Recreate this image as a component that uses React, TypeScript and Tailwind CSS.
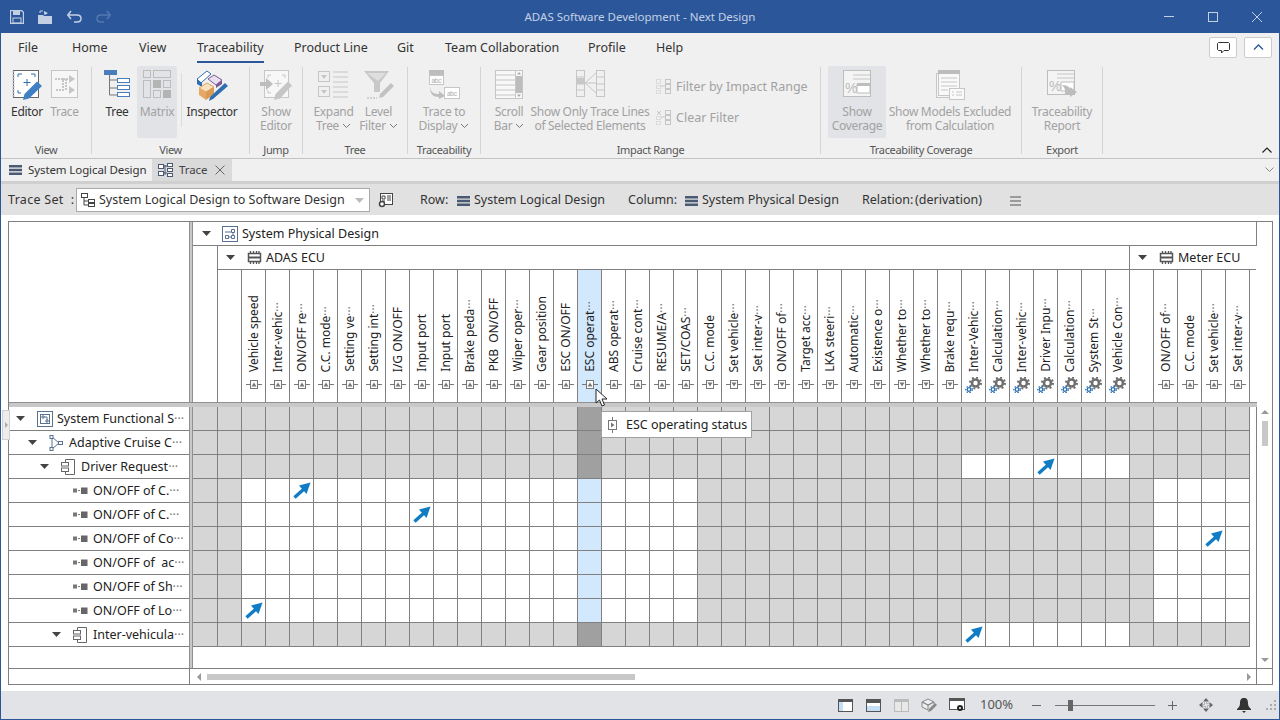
import React from "react";

const COL_W = "w-[24px]";

// [label, port kind], a trailing ~ means the label is cut off with dots
const adasCols: [string, string][] = [
  ["Vehicle speed", "up"], ["Inter-vehic~", "up"], ["ON/OFF re~", "up"], ["C.C. mode~", "up"],
  ["Setting ve~", "up"], ["Setting int~", "up"], ["I/G ON/OFF", "up"], ["Input port", "up"],
  ["Input port", "up"], ["Brake peda~", "up"], ["PKB  ON/OFF", "up"], ["Wiper oper~", "up"],
  ["Gear position", "up"], ["ESC ON/OFF", "up"], ["ESC operat~", "up"], ["ABS operat~", "up"],
  ["Cruise cont~", "up"], ["RESUME/A~", "up"], ["SET/COAS~", "up"], ["C.C. mode", "down"],
  ["Set vehicle~", "down"], ["Set inter-v~", "down"], ["ON/OFF of~", "down"], ["Target acc~", "down"],
  ["LKA steeri~", "down"], ["Automatic~", "down"], ["Existence o~", "down"], ["Whether to~", "down"],
  ["Whether to~", "down"], ["Brake requ~", "down"], ["Inter-Vehic~", "gear"], ["Calculation~", "gear"],
  ["Inter-vehic~", "gear"], ["Driver Inpu~", "gear"], ["Calculation~", "gear"], ["System St~", "gear"],
  ["Vehicle Con~", "gear"],
];
const meterCols: [string, string][] = [
  ["ON/OFF of~", "up"], ["C.C. mode", "up"], ["Set vehicle~", "up"], ["Set inter-v~", "up"],
];

const treeRows = [
  { pad: 7, arrow: true, icon: "system", label: "System Functional S" },
  { pad: 19, arrow: true, icon: "flow", label: "Adaptive Cruise C" },
  { pad: 31, arrow: true, icon: "comp", label: "Driver Request" },
  { pad: 64, arrow: false, icon: "leaf", label: "ON/OFF of C." },
  { pad: 64, arrow: false, icon: "leaf", label: "ON/OFF of C." },
  { pad: 64, arrow: false, icon: "leaf", label: "ON/OFF of Co" },
  { pad: 64, arrow: false, icon: "leaf", label: "ON/OFF of  ac" },
  { pad: 64, arrow: false, icon: "leaf", label: "ON/OFF of Sh" },
  { pad: 64, arrow: false, icon: "leaf", label: "ON/OFF of Lo" },
  { pad: 43, arrow: true, icon: "comp", label: "Inter-vehicula" },
];

const arrows = ["3-4", "4-9", "5-42", "8-2", "2-35", "9-32"];

function cellClass(r: number, c: number) {
  const open = r >= 3 && r <= 8 ? (c >= 2 && c <= 20) || c >= 40 : (r === 2 || r === 9) && c >= 32 && c <= 38;
  if (c === 16) return r >= 3 && r <= 8 ? "bg-[#d2e9fd]" : "bg-[#a0a0a0]";
  return open ? "bg-white" : "bg-[#d6d6d6]";
}

const Dots = () => <span className="text-[#777]">···</span>;

function Caret() {
  return (
    <svg width="10" height="5" viewBox="0 0 10 5" className="shrink-0">
      <path d="M0 0h9L4.500 5z" fill="#444" />
    </svg>
  );
}

function PortIcon({ kind }: { kind: string }) {
  if (kind === "gear") {
    return (
      <svg width="17" height="16" viewBox="0 0 17 16">
        <circle cx="10.500" cy="6" r="3.500" fill="none" stroke="#707070" strokeWidth="2.600" />
        <circle cx="10.500" cy="6" r="5.500" fill="none" stroke="#707070" strokeWidth="2" strokeDasharray="2 2.300" />
        <circle cx="4" cy="12.500" r="1.800" fill="none" stroke="#2a70b8" strokeWidth="1.300" />
        <circle cx="4" cy="12.500" r="3.200" fill="none" stroke="#2a70b8" strokeWidth="1.200" strokeDasharray="1.500 1.500" />
      </svg>
    );
  }
  return (
    <svg width="16" height="9" viewBox="0 0 16 9">
      <path d="M0 4.500h4M12 4.500h4" stroke="#777" />
      <rect x="4.500" y="0.500" width="7" height="8" fill="#fff" stroke="#777" />
      <path d={kind === "up" ? "M8 2.500l2.500 4h-5z" : "M8 6.500l2.500-4h-5z"} fill="#777" />
    </svg>
  );
}

function HeadCell({ label, kind }: { label: string; kind: string }) {
  const cut = label.endsWith("~");
  const text = cut ? label.slice(0, -1) : label;
  const hot = label === "ESC operat~";
  return (
    <div className={`${COL_W} h-[132px] shrink-0 border-l border-[#808080] flex flex-col items-center ${hot ? "bg-[#d2e9fd]" : ""}`}>
      <div className="h-[102px] flex flex-col justify-end overflow-hidden">
        <span className="[writing-mode:vertical-rl] rotate-180 whitespace-pre text-[12px] leading-[16px] text-[#222]">
          {text}
          {cut && <Dots />}
        </span>
      </div>
      <div className="flex-1 flex items-start justify-center pt-[8px]">
        <div className={kind === "gear" ? "-mt-[3px]" : ""}>
          <PortIcon kind={kind} />
        </div>
      </div>
    </div>
  );
}

function ChipIcon() {
  return (
    <svg width="15" height="13" viewBox="0 0 15 13" className="shrink-0">
      <rect x="1.500" y="2.500" width="12" height="8" fill="none" stroke="#555" strokeWidth="1.500" />
      <path d="M2 6.500h11" stroke="#555" strokeWidth="2" />
      <path d="M3.500 0v2M6.500 0v2M9.500 0v2M12 0v2M3.500 11v2M6.500 11v2M9.500 11v2M12 11v2" stroke="#555" strokeWidth="1.300" />
    </svg>
  );
}

function TreeIcon({ kind }: { kind: string }) {
  if (kind === "system") {
    return (
      <svg width="16" height="16" viewBox="0 0 16 16" className="shrink-0">
        <rect x="0.500" y="0.500" width="15" height="15" fill="#fff" stroke="#5a7190" />
        <rect x="3.500" y="3.500" width="9" height="9" fill="none" stroke="#5a7190" />
        <path d="M5 5h2v2H5zM9 9h2v2H9zM7 6h3v3" fill="none" stroke="#5a7190" />
      </svg>
    );
  }
  if (kind === "flow") {
    return (
      <svg width="14" height="16" viewBox="0 0 14 16" className="shrink-0">
        <path d="M3 2v12M3 2l7 6-7 6" fill="none" stroke="#5a7190" />
        <rect x="1" y="0.500" width="3" height="3" fill="#fff" stroke="#5a7190" />
        <rect x="1" y="12.500" width="3" height="3" fill="#fff" stroke="#5a7190" />
        <rect x="9.500" y="6.500" width="4" height="3" fill="#fff" stroke="#5a7190" />
      </svg>
    );
  }
  if (kind === "comp") {
    return (
      <svg width="14" height="16" viewBox="0 0 14 16" className="shrink-0">
        <path d="M4.500 3V0.500h9v15h-9V13" fill="none" stroke="#666" />
        <rect x="0.500" y="3.500" width="7" height="3.500" fill="#fff" stroke="#666" />
        <rect x="0.500" y="9" width="7" height="3.500" fill="#fff" stroke="#666" />
      </svg>
    );
  }
  return (
    <svg width="15" height="7" viewBox="0 0 15 7" className="shrink-0">
      <rect x="0" y="1.500" width="4" height="4" fill="#777" />
      <path d="M5 3.500h2" stroke="#777" />
      <rect x="8" y="0.500" width="6.500" height="6.500" fill="#666" />
    </svg>
  );
}

function Arrow() {
  return (
    <svg width="18" height="17" viewBox="0 0 18 17">
      <path d="M1.500 15.500L11 7" stroke="#0f7cc4" strokeWidth="3.400" />
      <path d="M17.500 0.500L6 3.500l7.500 8.500z" fill="#0f7cc4" />
    </svg>
  );
}

function Splitter({ className }: { className: string }) {
  return <div className={`bg-[#c8c8c8] border-[#909090] ${className}`} />;
}

function RibbonItem({ w, icon, lines, off, hot, chevron }: { w: number; icon: React.ReactNode; lines: string[]; off?: boolean; hot?: boolean; chevron?: boolean }) {
  return (
    <div style={{ width: w }} className={`shrink-0 h-[72px] pt-[4px] flex flex-col items-center rounded-[2px] text-[12px] leading-[14px] tracking-[-0.3px] ${off ? "text-[#a2a2a2]" : "text-[#333]"} ${hot ? "bg-[#e1e3e6]" : ""}`}>
      <div className="h-[35px] flex items-start justify-center">{icon}</div>
      {lines.map((l, i) => (
        <div key={i} className="whitespace-nowrap flex items-center">
          {l}
          {chevron && i === lines.length - 1 && (
            <svg width="9" height="6" viewBox="0 0 9 6" className="ml-[3px]">
              <path d="M1 1l3.500 3.500L8 1" fill="none" stroke="#777" />
            </svg>
          )}
        </div>
      ))}
    </div>
  );
}

function RibbonGroup({ w, label, pl = 0, children }: { w: number; label: string; pl?: number; children: React.ReactNode }) {
  return (
    <div style={{ width: w }} className="shrink-0 flex h-full">
      <div className="flex-1 min-w-0 flex flex-col">
        <div style={{ paddingLeft: pl }} className="h-[80px] pt-[3px] flex items-start">{children}</div>
        <div className="h-[14px] text-center text-[11px] tracking-[-0.35px] leading-[14px] text-[#555] whitespace-nowrap">{label}</div>
      </div>
      <div className="w-px my-[4px] bg-[#d4d4d4]" />
    </div>
  );
}

const G = "#c6c6c6";

const icons = {
  editor: (
    <svg width="31" height="31" viewBox="0 0 31 31">
      <rect x="1.500" y="0.500" width="25" height="27" fill="#fff" stroke="#666" />
      <path d="M1.500 1v27" stroke="#bbb" strokeWidth="2" strokeDasharray="1.500 1.500" />
      <path d="M6 7V4h4M19 4h4v3M6 20v3h3" fill="none" stroke="#2f6fb0" />
      <path d="M15 9v7M11.500 12.500h7" stroke="#2f6fb0" />
      <path d="M11 30l1.500-6L25 11.500l5 4.500L17 28.500z" fill="#3f80c4" />
    </svg>
  ),
  trace: (
    <svg width="27" height="29" viewBox="0 0 27 29">
      <rect x="0.500" y="0.500" width="26" height="27" fill="#f7f7f7" stroke={G} />
      <path d="M4 9h8v11h-8M12 9h6M15 20V9" fill="none" stroke={G} strokeWidth="2" strokeDasharray="2 1" />
      <path d="M18 5l6 4-6 4zM18 16l6 4-6 4z" fill={G} />
    </svg>
  ),
  tree: (
    <svg width="26" height="28" viewBox="0 0 26 28">
      <rect x="0" y="0" width="13" height="5" fill="#4a7ebb" />
      <path d="M5.500 5v20h8M5.500 10h8M5.500 18h8" fill="none" stroke="#777" />
      <rect x="13.500" y="8.500" width="12" height="4" fill="#fff" stroke="#4a7ebb" />
      <rect x="13.500" y="15.500" width="12" height="4" fill="#fff" stroke="#4a7ebb" />
      <rect x="13.500" y="22.500" width="12" height="4" fill="#fff" stroke="#4a7ebb" />
    </svg>
  ),
  matrix: (
    <svg width="28" height="28" viewBox="0 0 28 28">
      <g fill="none" stroke="#bcbcbc">
        <rect x="0.500" y="0.500" width="7" height="7" />
        <rect x="10.500" y="0.500" width="17" height="7" />
        <rect x="0.500" y="10.500" width="7" height="17" />
        <rect x="20.500" y="10.500" width="7" height="7" />
        <rect x="10.500" y="20.500" width="7" height="7" />
      </g>
      <rect x="10" y="10" width="8" height="8" fill="#b4b4b4" />
      <rect x="20" y="20" width="8" height="8" fill="#b4b4b4" />
    </svg>
  ),
  inspector: (
    <svg width="33" height="31" viewBox="0 0 33 31">
      <path d="M1 9L11 1l4 3L5 13z" fill="#fff" stroke="#2f6fb0" />
      <path d="M1 9v5l5 3 0-4z" fill="#2f6fb0" />
      <path d="M12 9l6-4 8 5-6 5z" fill="#e8e0ee" stroke="#7d5a96" />
      <path d="M20 15l6-5v4l-6 4z" fill="#7d5a96" />
      <path d="M3 18l8-5 7 4-8 5z" fill="#fbe0bc" stroke="#e0a15c" />
      <path d="M3 18v7l7 5v-8z" fill="#e6a866" />
      <path d="M10 22l8-5v7l-8 6z" fill="#d99a55" />
      <path d="M13 31l1-4L29 13l3 3-15 13z" fill="#2f6fb0" />
    </svg>
  ),
  showEditor: (
    <svg width="33" height="31" viewBox="0 0 33 31">
      <rect x="4.500" y="0.500" width="24" height="27" fill="#f7f7f7" stroke={G} />
      <path d="M11 5H8v3M22 5h3v3M8 20v3h3" fill="none" stroke={G} />
      <path d="M18 10v7M14.500 13.500h7" stroke={G} />
      <path d="M0 12h6V8l7 6-7 6v-4H0z" fill="#bdbdbd" />
      <path d="M14 30l1.500-6L28 11.500l4 4L20 28.500z" fill="#c6c6c6" />
    </svg>
  ),
  expand: (
    <svg width="31" height="28" viewBox="0 0 31 28">
      <g fill="none" stroke={G}>
        <rect x="0.500" y="1.500" width="11" height="10" />
        <rect x="0.500" y="16.500" width="11" height="10" />
        <path d="M15 2h15M15 7h15M15 12h15M15 17h15M15 22h15M15 27h15" />
      </g>
      <path d="M3 5h6l-3 4zM3 20h6l-3 4z" fill={G} />
    </svg>
  ),
  filter: (
    <svg width="31" height="30" viewBox="0 0 31 30">
      <path d="M1 1h25L17 13v9H11V13z" fill="#c8c8c8" />
      <path d="M4 3h19l-8 8z" fill="#dedede" />
      <path d="M16 28l1-4L28 13l3 3-11 11z" fill="#c2c2c2" />
      <path d="M4 28h10" stroke={G} strokeDasharray="2 1" strokeWidth="1.500" />
    </svg>
  ),
  traceTo: (
    <svg width="32" height="29" viewBox="0 0 32 29">
      <rect x="1" y="0" width="15" height="6" fill="#bdbdbd" />
      <rect x="1.500" y="5.500" width="14" height="9" fill="#fff" stroke={G} />
      <text x="3.500" y="12.500" fontSize="6.500" fill="#aaa" fontFamily="Liberation Sans, sans-serif">abc</text>
      <path d="M2 17c1 6 4 7 9 7v-3l6 5-6 3v-2c-6 0-9-3-9-10z" fill="#bdbdbd" />
      <rect x="16.500" y="17.500" width="15" height="11" fill="#fff" stroke={G} />
      <text x="19" y="25.500" fontSize="6.500" fill="#aaa" fontFamily="Liberation Sans, sans-serif">abc</text>
    </svg>
  ),
  scroll: (
    <svg width="28" height="29" viewBox="0 0 28 29">
      <rect x="0.500" y="0.500" width="27" height="28" fill="#f8f8f8" stroke={G} />
      <path d="M1 5h20M1 10h20M1 15h20M1 20h20M1 25h20M20.500 0v29" stroke={G} />
      <rect x="21" y="6" width="6" height="17" fill="#bcbcbc" />
      <path d="M24 2l2 2.500h-4zM24 27l2-2.500h-4z" fill="#aaa" />
    </svg>
  ),
  onlyLines: (
    <svg width="29" height="27" viewBox="0 0 29 27">
      <g fill="none" stroke={G}>
        <rect x="0.500" y="0.500" width="8" height="26" />
        <path d="M0 7h8M0 14h8M0 20h8" />
        <rect x="20.500" y="0.500" width="8" height="26" />
        <path d="M20 7h8M20 14h8M20 20h8M9 13l11-10M9 13l11 0M9 13l11 10" />
      </g>
      <rect x="1" y="8" width="8" height="6" fill="#c8c8c8" />
    </svg>
  ),
  coverage: (
    <svg width="29" height="28" viewBox="0 0 29 28">
      <rect x="0.500" y="0.500" width="27" height="26" fill="#f4f4f4" stroke="#bdbdbd" />
      <path d="M10 5h17M10 9h17" stroke="#c6c6c6" />
      <text x="2" y="23" fontSize="14" fill="#bbb" fontFamily="Liberation Sans, sans-serif">%</text>
      <path d="M14 14h13v9H14z" fill="#fff" stroke="#bdbdbd" />
      <rect x="14" y="13" width="13" height="3" fill="#bdbdbd" />
    </svg>
  ),
  models: (
    <svg width="30" height="30" viewBox="0 0 30 30">
      <rect x="1.500" y="3.500" width="22" height="24" fill="#f7f7f7" stroke={G} />
      <rect x="3.500" y="0.500" width="21" height="25" fill="#f9f9f9" stroke={G} />
      <rect x="3" y="0" width="22" height="4" fill="#bdbdbd" />
      <path d="M6 8h16M6 12h16M6 16h16M6 20h7" stroke={G} />
      <rect x="14.500" y="18.500" width="15" height="11" fill="#fafafa" stroke={G} />
      <path d="M17 22h2M21 22h6M17 25h2M21 25h6" stroke={G} />
    </svg>
  ),
  report: (
    <svg width="31" height="28" viewBox="0 0 31 28">
      <rect x="0.500" y="0.500" width="27" height="24" fill="#f4f4f4" stroke="#bdbdbd" />
      <path d="M10 4h17M10 8h17" stroke="#c6c6c6" />
      <text x="2" y="21" fontSize="14" fill="#bbb" fontFamily="Liberation Sans, sans-serif">%</text>
      <path d="M14 12h13v9H14z" fill="#fff" stroke="#bdbdbd" />
      <path d="M15 15c4 0 7 1 8 4v-2l7 5-7 5v-3h-5c1-4-1-7-3-9z" fill="#bcbcbc" />
    </svg>
  ),
};

function SmallFilterIcon({ x }: { x?: boolean }) {
  return (
    <svg width="15" height="15" viewBox="0 0 15 15" className="shrink-0">
      <g fill="none" stroke="#c6c6c6">
        {x ? <path d="M1 1l4 4M5 1L1 5" /> : <rect x="0.500" y="0.500" width="4" height="4" strokeDasharray="1 1" />}
        <rect x="0.500" y="6.500" width="4" height="3" strokeDasharray="1 1" />
        <rect x="0.500" y="11.500" width="4" height="3" strokeDasharray="1 1" />
        <rect x="9.500" y="0.500" width="5" height="4" />
        <rect x="9.500" y="5.500" width="5" height="4" />
        <rect x="9.500" y="10.500" width="5" height="4" />
        <path d="M5 7h4" />
      </g>
    </svg>
  );
}

function ListGlyph() {
  return (
    <svg width="13" height="10" viewBox="0 0 13 10" className="shrink-0">
      <path d="M0 0h13v2.500H0zM0 3.700h13v2.600H0zM0 7.500h13V10H0z" fill="#4a5a72" />
    </svg>
  );
}

function App() {
  const tabs: [string, number][] = [
    ["File", 54], ["Home", 67], ["View", 58], ["Traceability", 97], ["Product Line", 103],
    ["Git", 48], ["Team Collaboration", 143], ["Profile", 68], ["Help", 40],
  ];
  return (
    <div className="w-[1280px] h-[720px] overflow-hidden flex flex-col bg-white border-x border-b border-[#2b579a] font-['Noto_Sans','Noto_Sans_CJK_JP',sans-serif] text-[#333]">
      {/* title bar */}
      <div className="h-[33px] shrink-0 bg-[#2b579a] flex items-center relative">
        <div className="flex items-center gap-[14px] pl-[9px] w-[300px]">
          <svg width="14" height="14" viewBox="0 0 14 14">
            <path d="M0.500 0.500h11l2 2v11H0.500z" fill="none" stroke="#c3d0e4" strokeWidth="1.300" />
            <rect x="3" y="1" width="7" height="4" fill="#c3d0e4" />
            <rect x="3" y="8" width="8" height="5" fill="none" stroke="#c3d0e4" />
          </svg>
          <svg width="15" height="14" viewBox="0 0 15 14">
            <path d="M0 5h5l1 1h8v8H0z" fill="#c3d0e4" />
            <path d="M6 4V1l4 2-3 2" fill="#c3d0e4" />
            <path d="M2 3V1h3" fill="none" stroke="#c3d0e4" />
          </svg>
          <svg width="15" height="13" viewBox="0 0 15 13">
            <path d="M1 5h9c2.500 0 4 1.500 4 3.500S12.500 12 10 12H7M4 1L0.800 5 4 9" fill="none" stroke="#c3d0e4" strokeWidth="1.500" />
          </svg>
          <svg width="15" height="13" viewBox="0 0 15 13">
            <path d="M14 5H5C2.500 5 1 6.500 1 8.500S2.500 12 5 12h3M11 1l3.200 4L11 9" fill="none" stroke="#5279b0" strokeWidth="1.500" />
          </svg>
        </div>
        <div className="flex-1 text-center text-[11.500px] text-[#c3d0e4]">ADAS Software Development - Next Design</div>
        <div className="w-[300px] flex items-center justify-end pr-[17px] gap-[34px]">
          <div className="w-[10px] h-px bg-[#c3d0e4]" />
          <div className="w-[10px] h-[10px] border border-[#c3d0e4]" />
          <svg width="10" height="10" viewBox="0 0 10 10">
            <path d="M0 0l10 10M10 0L0 10" stroke="#c3d0e4" />
          </svg>
        </div>
      </div>

      {/* ribbon tabs */}
      <div className="h-[30px] shrink-0 bg-[#f0f0f0] flex items-start pl-[17px] text-[12.500px]">
        {tabs.map(([t, w]) => (
          <div key={t} style={{ width: w }} className="shrink-0 pt-[5px]">
            <div className={`inline-block h-[25px] leading-[19px] ${t === "Traceability" ? "border-b-[2px] border-[#2b579a]" : ""}`}>{t}</div>
          </div>
        ))}
        <div className="flex-1 flex justify-end gap-[7px] pr-[7px] pt-[4px]">
          <div className="w-[28px] h-[21px] bg-white border border-[#ccc] rounded-[2px] flex items-center justify-center">
            <svg width="13" height="12" viewBox="0 0 13 12">
              <path d="M1.500 0.500h10l1 1v6l-1 1H7L4.500 11V8.500h-3l-1-1v-6z" fill="none" stroke="#333" />
            </svg>
          </div>
          <div className="w-[28px] h-[21px] bg-white border border-[#ccc] rounded-[2px] flex items-center justify-center">
            <svg width="11" height="7" viewBox="0 0 11 7">
              <path d="M1 5.500l4.500-4.500L10 5.500" fill="none" stroke="#2b579a" strokeWidth="1.300" />
            </svg>
          </div>
        </div>
      </div>

      {/* ribbon */}
      <div className="h-[95px] shrink-0 bg-[#f0f0f0] flex relative">
        <RibbonGroup w={91} label="View" pl={7}>
          <RibbonItem w={38} icon={icons.editor} lines={["Editor"]} />
          <RibbonItem w={37} icon={icons.trace} lines={["Trace"]} off />
        </RibbonGroup>
        <RibbonGroup w={158} label="View" pl={5}>
          <RibbonItem w={40} icon={icons.tree} lines={["Tree"]} />
          <RibbonItem w={40} icon={icons.matrix} lines={["Matrix"]} off hot />
          <div className="w-px h-[54px] mt-[7px] ml-[4px] bg-[#dcdcdc]" />
          <RibbonItem w={60} icon={icons.inspector} lines={["Inspector"]} />
        </RibbonGroup>
        <RibbonGroup w={53} label="Jump">
          <RibbonItem w={52} icon={icons.showEditor} lines={["Show", "Editor"]} off />
        </RibbonGroup>
        <RibbonGroup w={105} label="Tree" pl={8}>
          <RibbonItem w={45} icon={icons.expand} lines={["Expand", "Tree"]} off chevron />
          <RibbonItem w={45} icon={icons.filter} lines={["Level", "Filter"]} off chevron />
        </RibbonGroup>
        <RibbonGroup w={73} label="Traceability">
          <RibbonItem w={72} icon={icons.traceTo} lines={["Trace to", "Display"]} off chevron />
        </RibbonGroup>
        <RibbonGroup w={340} label="Impact Range" pl={8}>
          <RibbonItem w={40} icon={icons.scroll} lines={["Scroll", "Bar"]} off chevron />
          <RibbonItem w={122} icon={icons.onlyLines} lines={["Show Only Trace Lines", "of Selected Elements"]} off />
          <div className="ml-[5px] pt-[13px] flex flex-col gap-[16px] text-[12.500px] leading-[15px] text-[#a2a2a2]">
            <div className="flex items-center gap-[5px] whitespace-nowrap"><SmallFilterIcon />Filter by Impact Range</div>
            <div className="flex items-center gap-[5px] whitespace-nowrap"><SmallFilterIcon x />Clear Filter</div>
          </div>
        </RibbonGroup>
        <RibbonGroup w={201} label="Traceability Coverage" pl={7}>
          <RibbonItem w={58} icon={icons.coverage} lines={["Show", "Coverage"]} off hot />
          <RibbonItem w={128} icon={icons.models} lines={["Show Models Excluded", "from Calculation"]} off />
        </RibbonGroup>
        <RibbonGroup w={81} label="Export">
          <RibbonItem w={80} icon={icons.report} lines={["Traceability", "Report"]} off />
        </RibbonGroup>
        <div className="flex-1 flex items-end justify-end pr-[7px] pb-[5px]">
          <svg width="10" height="6" viewBox="0 0 10 6">
            <path d="M0.500 5.500L5 1l4.500 4.500" fill="none" stroke="#222" strokeWidth="1.200" />
          </svg>
        </div>
      </div>

      {/* document tabs */}
      <div className="h-[23px] shrink-0 bg-[#f0f0f0] border-t border-[#c4c4c4] flex items-stretch text-[11.500px] tracking-[-0.1px] whitespace-nowrap">
        <div className="w-[151px] flex items-center pl-[8px] gap-[6px]">
          <ListGlyph />
          <span>System Logical Design</span>
        </div>
        <div className="w-[80px] bg-[#dadada] flex items-center pl-[6px] gap-[6px]">
          <svg width="15" height="14" viewBox="0 0 15 14" className="shrink-0">
            <g fill="#fff" stroke="#4a5a72">
              <rect x="0.500" y="1.500" width="5" height="4" />
              <rect x="0.500" y="8.500" width="5" height="4" />
              <rect x="9.500" y="0.500" width="5" height="3" />
              <rect x="9.500" y="5.500" width="5" height="3" />
              <rect x="9.500" y="10.500" width="5" height="3" />
              <path d="M5 3h4M5 10h4M7 2v10" fill="none" />
            </g>
          </svg>
          <span className="text-[#444]">Trace</span>
          <svg width="10" height="10" viewBox="0 0 10 10" className="ml-[2px] shrink-0">
            <path d="M0.500 0.500l9 9M9.500 0.500l-9 9" stroke="#666" />
          </svg>
        </div>
        <div className="flex-1 flex items-center justify-end pr-[5px]">
          <svg width="9" height="6" viewBox="0 0 9 6">
            <path d="M0.500 0.500L4.500 4.500l4-4" fill="none" stroke="#888" />
          </svg>
        </div>
      </div>
      <div className="h-[3px] shrink-0 bg-[#cfcfcf]" />

      {/* trace toolbar */}
      <div className="h-[31px] shrink-0 pt-[2px] bg-[#e1e1e1] flex items-center text-[12.500px] whitespace-nowrap">
        <div className="w-[74px] pl-[7px] tracking-[0.3px] whitespace-pre">Trace Set  :</div>
        <div className="w-[294px] h-[24px] ml-[1px] -mt-[1px] bg-white border border-[#aaa] flex items-center pl-[4px] gap-[4px]">
          <svg width="14" height="14" viewBox="0 0 14 14" className="shrink-0">
            <g fill="none" stroke="#444">
              <rect x="0.500" y="0.500" width="6" height="4" />
              <path d="M3 5v7h4M3 8h4" />
              <rect x="7.500" y="6.500" width="6" height="3" />
              <rect x="7.500" y="10.500" width="6" height="3" />
            </g>
          </svg>
          <span className="flex-1">System Logical Design to Software Design</span>
          <svg width="9" height="5" viewBox="0 0 9 5" className="mr-[5px]">
            <path d="M0 0h9L4.500 5z" fill="#bbb" />
          </svg>
        </div>
        <div className="w-[50px] flex justify-end pr-[27px]">
          <svg width="15" height="15" viewBox="0 0 15 15">
            <rect x="2.500" y="0.500" width="12" height="11" fill="#fff" stroke="#444" />
            <path d="M4 3h3v3H4zM9 3h4M9 5h4M9 7h4M4 8h3" fill="none" stroke="#444" />
            <circle cx="4" cy="11" r="2.500" fill="#fff" stroke="#444" strokeWidth="1.500" />
          </svg>
        </div>
        <span className="w-[37px]">Row:</span>
        <div className="w-[171px] flex items-center gap-[4px]"><ListGlyph />System Logical Design</div>
        <span className="w-[57px]">Column:</span>
        <div className="w-[177px] flex items-center gap-[4px]"><ListGlyph />System Physical Design</div>
        <span className="w-[53px]">Relation:</span>
        <span className="w-[95px]">(derivation)</span>
        <svg width="11" height="10" viewBox="0 0 11 10">
          <path d="M0 1h11M0 5h11M0 9h11" stroke="#555" />
        </svg>
      </div>

      {/* matrix */}
      <div className="flex-1 min-h-0 px-[7px] pt-[6px]">
        <div className="relative w-[1265px] h-[464px] border border-[#808080] bg-white text-[12px] text-[#222]">
          {/* header */}
          <div className="flex h-[180px]">
            <div className="w-[180px] shrink-0" />
            <Splitter className="w-[4px] shrink-0 border-x" />
            <div className="flex-1 min-w-0 flex flex-col">
              <div className="w-[1064px] h-[24px] border-b border-r border-[#808080] flex items-center pl-[9px]">
                <Caret />
                <svg width="16" height="16" viewBox="0 0 16 16" className="shrink-0 ml-[10px]">
                  <rect x="0.500" y="0.500" width="15" height="15" fill="#fff" stroke="#5a7190" />
                  <path d="M9.500 3.500h3v3h-3zM3.500 9.500h3v3h-3zM9.500 9.500h3v3h-3zM6 11h4M11 6.500v3M3 6h6" fill="none" stroke="#5a7190" />
                </svg>
                <span className="whitespace-nowrap text-[12.500px] ml-[4px] pt-[2px]">System Physical Design</span>
              </div>
              <div className="flex w-[1063px] overflow-hidden">
                <div className={`${COL_W} shrink-0`} />
                <div className="shrink-0 border-l border-[#808080] w-[912px] flex flex-col">
                  <div className="h-[24px] -ml-px border-b border-[#808080] flex items-center pl-[9px]">
                    <Caret />
                    <span className="ml-[11px]"><ChipIcon /></span>
                    <span className="text-[12.500px] ml-[4px] pt-[2px]">ADAS ECU</span>
                  </div>
                  <div className="flex -ml-px">
                    <div className={`${COL_W} shrink-0`} />
                    {adasCols.map(([l, k], i) => <HeadCell key={i} label={l} kind={k} />)}
                  </div>
                </div>
                <div className="shrink-0 border-l border-[#808080] w-[127px] flex flex-col">
                  <div className="h-[24px] -ml-px border-b border-[#808080] flex items-center pl-[9px]">
                    <Caret />
                    <span className="ml-[11px]"><ChipIcon /></span>
                    <span className="text-[12.500px] ml-[4px] pt-[2px]">Meter ECU</span>
                  </div>
                  <div className="flex -ml-px">
                    <div className={`${COL_W} shrink-0`} />
                    {meterCols.map(([l, k], i) => <HeadCell key={i} label={l} kind={k} />)}
                    <div className="w-px h-[132px] bg-[#808080]" />
                  </div>
                </div>
              </div>
            </div>
          </div>
          <Splitter className="w-[1248px] h-[5px] border-t" />

          {/* body */}
          <div className="flex h-[261px]">
            <div className="w-[180px] shrink-0">
              {treeRows.map((r, i) => (
                <div key={i} style={{ paddingLeft: r.pad }} className="h-[24px] border-b border-[#808080] flex items-center whitespace-pre overflow-hidden text-[12.500px]">
                  {r.arrow && <span className="mr-[11px]"><Caret /></span>}
                  <TreeIcon kind={r.icon} />
                  <span className={`pt-[1px] ${r.icon === "leaf" ? "ml-[5px]" : r.icon === "system" ? "ml-[4px]" : "ml-[6px]"}`}>{r.label}<Dots /></span>
                </div>
              ))}
            </div>
            <Splitter className="w-[4px] shrink-0 border-x" />
            <div className="w-[1063px] shrink-0">
              {treeRows.map((_, r) => (
                <div key={r} className="flex">
                  {Array.from({ length: 44 }, (_, c) => (
                    <div key={c} className={`${COL_W} h-[24px] shrink-0 border-b border-[#808080] flex items-center justify-center ${c > 0 ? "border-l" : ""} ${cellClass(r, c)}`}>
                      {arrows.includes(`${r}-${c}`) && <Arrow />}
                    </div>
                  ))}
                  <div className="w-px h-[24px] bg-[#808080]" />
                </div>
              ))}
            </div>
            <div className="w-[16px] shrink-0 border-l border-[#808080] flex flex-col items-center pt-[3px] pb-[6px]">
              <svg width="8" height="4" viewBox="0 0 8 4"><path d="M4 0l4 4H0z" fill="#999" /></svg>
              <div className="w-[6px] h-[25px] mt-[7px] bg-[#c8c8c8]" />
              <div className="flex-1" />
              <svg width="8" height="4" viewBox="0 0 8 4"><path d="M4 4l4-4H0z" fill="#999" /></svg>
            </div>
          </div>

          {/* horizontal scroll row */}
          <div className="flex h-[16px] border-t border-[#808080]">
            <div className="w-[181px] shrink-0 border-r border-[#808080]" />
            <div className="flex-1 flex items-center pl-[7px] pr-[5px]">
              <svg width="4" height="8" viewBox="0 0 4 8"><path d="M0 4l4-4v8z" fill="#999" /></svg>
              <div className="w-[428px] h-[6px] ml-[6px] bg-[#c8c8c8]" />
              <div className="flex-1" />
              <svg width="4" height="8" viewBox="0 0 4 8"><path d="M4 4L0 0v8z" fill="#999" /></svg>
            </div>
            <div className="w-[16px] shrink-0 border-l border-[#808080]" />
          </div>

          {/* pane flap on the left edge */}
          <div className="absolute left-[-7px] top-[188px] w-[8px] h-[30px] bg-[#ededed] border border-[#d0d0d0] flex items-center justify-center">
            <svg width="3" height="6" viewBox="0 0 3 6"><path d="M0 0l3 3-3 3z" fill="#aaa" /></svg>
          </div>

          {/* tooltip */}
          <div className="absolute left-[592px] top-[189px] w-[151px] h-[27px] bg-white border border-[#a0a0a0] flex items-center pl-[6px] gap-[9px] text-[12.500px] whitespace-nowrap">
            <svg width="9" height="16" viewBox="0 0 9 16" className="shrink-0">
              <path d="M4.500 0v3M4.500 13v3" stroke="#777" />
              <rect x="0.500" y="3.500" width="8" height="9" fill="#fff" stroke="#777" />
              <path d="M3 5.500l3.500 2.500L3 10.500z" fill="#777" />
            </svg>
            <span className="pt-[1px]">ESC operating status</span>
          </div>

          {/* mouse pointer */}
          <svg width="13" height="20" viewBox="0 0 13 20" className="absolute left-[586px] top-[166px]">
            <path d="M1 1v14l3.500-3L7 18l2.500-1-2.500-6h5z" fill="#fff" stroke="#222" />
          </svg>
        </div>
      </div>

      {/* status bar */}
      <div className="h-[28px] shrink-0 bg-[#e1e3e6] flex items-center text-[13px] text-[#555] pl-[837px] whitespace-nowrap">
        <svg width="15" height="13" viewBox="0 0 15 13" className="mr-[13px]">
          <rect x="0.500" y="0.500" width="14" height="12" fill="#fff" stroke="#555" />
          <rect x="1" y="1" width="13" height="2" fill="#555" />
          <rect x="1" y="3" width="4" height="9" fill="#c4e0f7" />
        </svg>
        <svg width="15" height="13" viewBox="0 0 15 13" className="mr-[13px]">
          <rect x="0.500" y="0.500" width="14" height="12" fill="#fff" stroke="#555" />
          <rect x="1" y="1" width="13" height="3" fill="#555" />
          <rect x="1" y="7" width="13" height="5" fill="#c4e0f7" />
        </svg>
        <svg width="15" height="13" viewBox="0 0 15 13" className="mr-[12px]">
          <rect x="0.500" y="0.500" width="14" height="12" fill="#e8e8e8" stroke="#bbb" />
          <rect x="1" y="1" width="13" height="2" fill="#bbb" />
          <path d="M7.500 3v9" stroke="#bbb" />
        </svg>
        <svg width="16" height="15" viewBox="0 0 16 15" className="mr-[12px]">
          <path d="M1 4l6-3 6 3-6 3zM1 4v5l6 3V7zM7 7l6-3v2" fill="#eee" stroke="#888" />
          <path d="M7 14l1-3 6-6 2 2-6 6z" fill="#888" />
        </svg>
        <svg width="16" height="14" viewBox="0 0 16 14" className="mr-[15px]">
          <rect x="0.500" y="0.500" width="15" height="11" fill="#fff" stroke="#555" />
          <rect x="1" y="1" width="14" height="2" fill="#555" />
          <circle cx="11" cy="10" r="2" fill="#fff" stroke="#222" strokeWidth="2" />
        </svg>
        <span className="w-[52px]">100%</span>
        <div className="w-[9px] h-px bg-[#666] mr-[14px]" />
        <div className="relative w-[100px] h-px bg-[#777] mr-[13px]">
          <div className="absolute left-[13px] -top-[5px] w-[5px] h-[11px] bg-[#666]" />
        </div>
        <svg width="9" height="9" viewBox="0 0 9 9" className="mr-[22px]">
          <path d="M4.500 0v9M0 4.500h9" stroke="#666" />
        </svg>
        <svg width="14" height="14" viewBox="0 0 14 14" className="mr-[24px]">
          <path d="M7 0l3 3.500H4zM7 14l3-3.500H4zM0 7l3.500-3v6zM14 7l-3.500-3v6z" fill="#666" />
          <rect x="5" y="5" width="4" height="4" fill="none" stroke="#888" strokeDasharray="1 1" />
        </svg>
        <svg width="14" height="15" viewBox="0 0 14 15" className="mr-[13px]">
          <path d="M7 0c3 0 4 2 4 5 0 3 1 4 3 6v1H0v-1c2-2 3-3 3-6 0-3 1-5 4-5z" fill="#333" />
          <path d="M5 13h4l-2 2z" fill="#333" />
        </svg>
        <svg width="12" height="12" viewBox="0 0 12 12">
          <path d="M10 1h2v2h-2zM6 5h2v2H6zM10 5h2v2h-2zM2 9h2v2H2zM6 9h2v2H6zM10 9h2v2h-2z" fill="#aaa" />
        </svg>
      </div>
    </div>
  );
}

export default App;
